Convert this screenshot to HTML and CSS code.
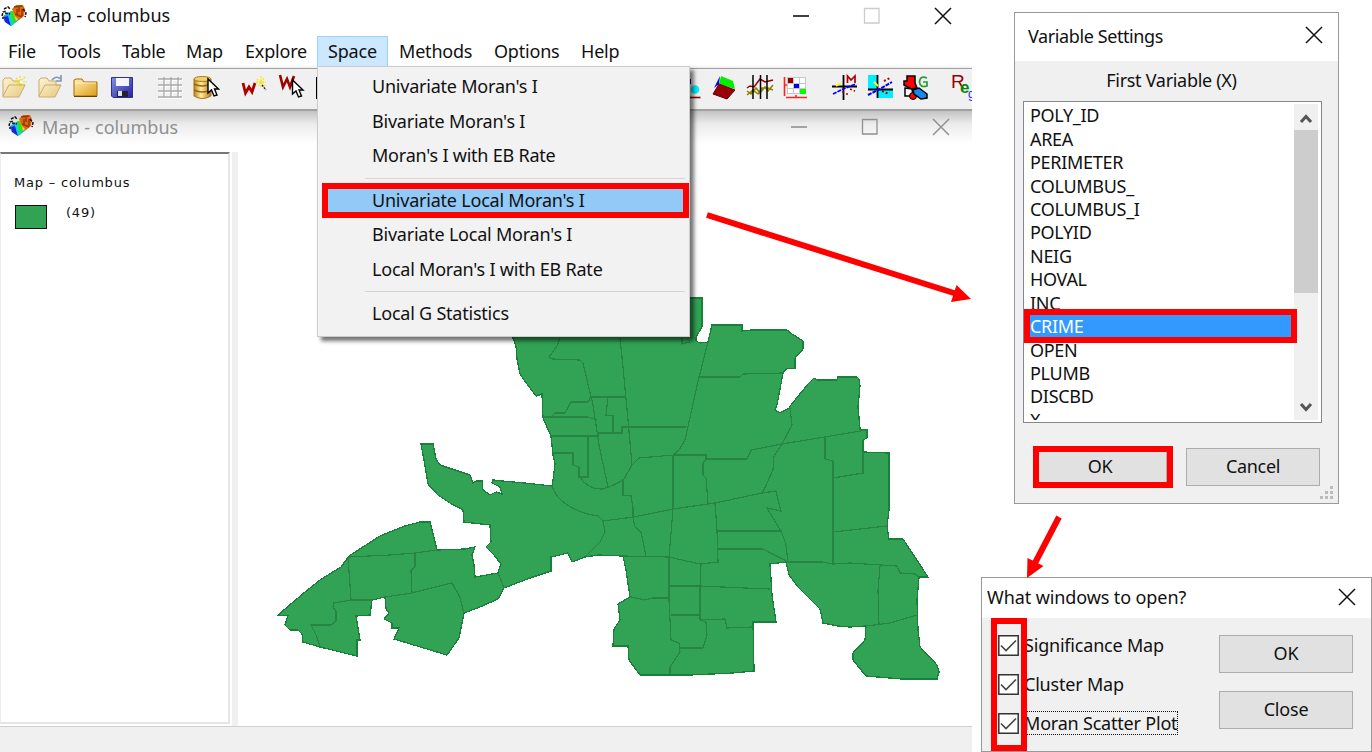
FILE: index.html
```html
<!DOCTYPE html>
<html lang="en">
<head>
<meta charset="utf-8">
<title>Map - columbus</title>
<link rel="stylesheet" href="styles.css">
</head>
<body>
<svg class="defs" width="0" height="0">
  <symbol id="logo" viewBox="0 0 26 24">
    <path d="M2 12L8 8L14 7L18 16L10 22L3 17Z" fill="#18a8e8"/>
    <path d="M3 13L7 12L10 22L4 18Z" fill="#2020e0"/>
    <path d="M7 11L11 10L13 20L10 22Z" fill="#10d8c0"/>
    <path d="M9 7L14 7L16 16L12 19Z" fill="#30e020"/>
    <path d="M12 7L16 10L18 14L15 17Z" fill="#e8e000"/>
    <path d="M11 5L15 1L22 1L24 5L23 12L18 16L14 12Z" fill="#e06810"/>
    <path d="M13 3L21 2M16 5V11M21 5V12M14 10L21 13M18 3V8" fill="none" stroke="#98380a" stroke-width="1.5"/>
    <path d="M1 12L2 8L5 7M3 5L7 3L9 5M4 9L9 10M1 14H3M22 5L25 9L24 13" fill="none" stroke="#111" stroke-width="1.5" stroke-dasharray="3 1"/>
  </symbol>
  <symbol id="cross" viewBox="0 0 18 18"><path d="M1 1L17 17M17 1L1 17" fill="none" stroke="currentColor" stroke-width="1.5"/></symbol>
  <symbol id="max" viewBox="0 0 18 18"><path d="M1.5 1.5H16V16H1.5Z" fill="none" stroke="currentColor" stroke-width="1.3"/></symbol>
  <symbol id="min" viewBox="0 0 18 18"><path d="M1 9H17" stroke="currentColor" stroke-width="1.6"/></symbol>
  <symbol id="check" viewBox="0 0 21 21"><path d="M.8 .8H20.2V20.2H.8Z" fill="#fff" stroke="#333" stroke-width="1.5"/><path d="M3 10.5L8 15.5L18 5.5" fill="none" stroke="#444" stroke-width="1.6"/></symbol>
</svg>

<section class="app">
  <header class="titlebar">
    <svg class="logo"><use href="#logo"/></svg>
    <span class="title">Map - columbus</span>
    <span class="controls"><svg><use href="#min"/></svg><svg class="faded"><use href="#max"/></svg><svg><use href="#cross"/></svg></span>
  </header>
  <nav class="menubar">
    <span>File</span><span>Tools</span><span>Table</span><span>Map</span><span>Explore</span><span class="open">Space</span><span>Methods</span><span>Options</span><span>Help</span>
  </nav>
  <div class="toolbar">
    <svg width="330" height="40" viewBox="0 69 330 40">
      <defs>
        <linearGradient id="gold" x2="1" y2="1"><stop stop-color="#ffedb0"/><stop offset="1" stop-color="#df9d18"/></linearGradient>
        <linearGradient id="pale" x2="1" y2="1"><stop stop-color="#fff4cf"/><stop offset="1" stop-color="#e6c984"/></linearGradient>
        <linearGradient id="can"><stop stop-color="#b98315"/><stop offset=".4" stop-color="#ffeca8"/><stop offset="1" stop-color="#b87a0c"/></linearGradient>
        <linearGradient id="disk" x2="1" y2="1"><stop stop-color="#8490ea"/><stop offset="1" stop-color="#2424a0"/></linearGradient>
        <path id="folder" d="M3 97V80L5 78H11L13 81H20V85H25L19 97Z M3 96L9 85H25"/>
        <path id="cursor" d="M0 0V14L3.500 11L6 17L9 16L6.500 10H10.500Z" fill="#fff" stroke="#000" stroke-width="1.4"/>
      </defs>
      <use href="#folder" fill="url(#pale)" stroke="#c9ac70"/>
      <path d="M20 76V88M14 82H27M16 78L25 87M25 77L15 86" stroke="#e8e020" stroke-width="1.2" stroke-dasharray="2 1"/><circle cx="21" cy="82" r="1.5" fill="#fff"/>
      <use href="#folder" x="36" fill="url(#pale)" stroke="#c9ac70"/>
      <path d="M52 80Q56 75 61 79M61 75V81H56" fill="none" stroke="#7b98b4" stroke-width="1.6"/>
      <path d="M74 96V80L76 79H82L84 82H97V96Z" fill="url(#gold)" stroke="#a46b08"/><path d="M75 83H96" stroke="#fff1bb"/><path d="M74 96.5H97" stroke="#704000"/>
      <path d="M111.500 77.500H132.500V97.500H113L111.500 96Z" fill="url(#disk)" stroke="#30308c"/><path d="M116 78H129V86H116Z" fill="#f4f6ff"/><path d="M117 91H128V97H117Z" fill="#223"/><path d="M118 91H122V96H118Z" fill="#dce4e4"/>
      <g fill="none" stroke="#fff" stroke-width="2"><path d="M159 80H183M159 86H183M159 92H183M159 98H183M165 78V98M172 78V98M179 78V98"/></g>
      <path d="M158 79H182M158 85H182M158 91H182M158 97H182M164 77V97M171 77V97M178 77V97" fill="none" stroke="#a9a9a9" stroke-width="1.3"/>
      <path d="M194 79V96Q202 101 211 96V79Z" fill="url(#can)" stroke="#a77410"/><ellipse cx="202.500" cy="79" rx="8.500" ry="2.500" fill="#f1cf70" stroke="#ad7815"/><path d="M194 84Q202 88 211 84M194 90Q202 94 211 90" fill="none" stroke="#9a6508" stroke-width="1.5"/>
      <use href="#cursor" x="208" y="79"/>
      <path d="M243 83L245.500 93L249 87L252 92L255 83" fill="none" stroke="#b00000" stroke-width="2.8"/>
      <path d="M261 76V87M256 82H266M257 79L265 86M264 78L258 86" stroke="#f2ec25" stroke-width="1.3" stroke-dasharray="2 1"/><path d="M262 85L266 90" stroke="#222" stroke-width="1.4" stroke-dasharray="2 1"/>
      <path d="M280 75L283 87L287 79L290 87L294 76" fill="none" stroke="#a00000" stroke-width="2.6"/>
      <use href="#cursor" x="292.500" y="80"/>
      <path d="M317 77V99" stroke="#000" stroke-width="2"/>
    </svg>
    <svg width="284" height="40" viewBox="688 69 284 40">
      <path d="M688 79H691V84H688Z" fill="#00b"/><circle cx="695" cy="89.500" r="4.300" fill="#00efff"/><path d="M688 97.500H700.500" stroke="#900" stroke-width="1.6"/>
      <path d="M720 76L714 88L719 84Z" fill="#00f"/><path d="M721 76L733 81L735 89L719 84Z" fill="#00f000"/><path d="M719 84L735 90L727 99L713 94Z" fill="#980008" stroke="#600"/>
      <g fill="none" stroke-width="1.5"><path d="M747 88L750 86L754 87L760 79L765 82L773 80" stroke="#900"/><path d="M747 91L751 94L756 88L760 93L765 87L768 91L773 85M747 95L753 90L758 94L762 88L768 88L773 90" stroke="#8b8500" stroke-width="1.5"/><path d="M753 75V99M760.500 75V99M767 75V99" stroke="#000"/></g>
      <path d="M787 77H806V94H787Z" fill="#c7c7c7"/><g fill="#fff"><path d="M788 84H793V88H788ZM794 78H799V83H794ZM800 78H805V83H800ZM800 84H805V88H800ZM788 89H793V93H788ZM794 89H799V93H794Z"/></g><path d="M788 78H793V83H788Z" fill="#900"/><path d="M794 84H799V88H794Z" fill="#00f"/><path d="M800 89H806V94H800Z" fill="#0f0"/><path d="M784.500 77V96M784 85H787M786 97.500H807M796 95V98" stroke="#f22" stroke-width="1.6"/>
      <path d="M843.500 75V100M832 86.500H857" stroke="#000" stroke-width="1.8"/><path d="M833 94L843 89L856 84" fill="none" stroke="#00f" stroke-width="1.8" stroke-dasharray="4 1"/><path d="M846 94H850M850 89L855 91M842 92H845" stroke="#a00" stroke-width="1.6" stroke-dasharray="2 2"/><path d="M836 86L841 83" stroke="#ff0" stroke-width="2"/><path d="M847.500 83V76L851 80L855 76V83" fill="none" stroke="#a00" stroke-width="1.7"/>
      <path d="M868 75H878V89H868ZM878 89H893V98H878Z" fill="#00efff"/><path d="M877.500 75V98M868 89.500H893" stroke="#000" stroke-width="1.8"/><path d="M868 95L878 90L892 82" fill="none" stroke="#00f" stroke-width="2" stroke-dasharray="4 1"/><path d="M884 81L890 78M882 91L889 94" stroke="#a00" stroke-width="2" stroke-dasharray="2 2"/><path d="M874 82L878 86" stroke="#ff0" stroke-width="2"/>
      <path d="M907 76H915V83L917 88L911 89L904 85V81H907Z" fill="#f00" stroke="#000" stroke-width="1.5"/><path d="M905 88L912 89L913 96H905Z" fill="#fff" stroke="#000" stroke-width="1.5"/><circle cx="913" cy="96" r="3.500" fill="#f00" stroke="#000"/><path d="M913 90L919 88L927 94V98L921 99L914 94Z" fill="#158bef" stroke="#000" stroke-width="1.5"/><path d="M927 78Q920 75 919.500 82Q920 88 927 86V82H923" fill="none" stroke="#259b35" stroke-width="1.7"/>
      <text class="reg"><tspan x="951" y="88" fill="#900">R</tspan><tspan class="small" x="960" y="93" fill="#080">e</tspan><tspan class="tiny" x="968" y="98" fill="#22f">g</tspan></text>
    </svg>
  </div>
  <div class="child">
    <header class="titlebar inner">
      <svg class="logo"><use href="#logo"/></svg>
      <span class="title">Map - columbus</span>
      <span class="controls"><svg><use href="#min"/></svg><svg class="strong"><use href="#max"/></svg><svg><use href="#cross"/></svg></span>
    </header>
    <div class="split">
      <aside class="legend"><p>Map – columbus</p><div class="entry"><i></i><span>(49)</span></div></aside>
      <div class="sash"></div>
      <svg class="map" width="700" height="450" viewBox="272 240 700 450" shape-rendering="crispEdges">
        <path class="area" d="M512 330L513 338L516 346L517 359L520 374L524 380L530 388L536 396L542 394L543 418L551 436L553 455L555 464L553 480L552 486L525 483L502 481L493 480L492 483L500 487L502 494L496 492L490 495L483 490L482 481L476 481L473 483L470 475L455 470L440 465L436 459L433 444H421L424 460L428 484L438 495L450 503L463 510L464 522L490 525L491 542L486 547L494 555L501 564L498 573L475 577L474 565L472 555L475 547L465 549L437 550L430 522H420L405 526L380 536L349 556L341 567L320 580L305 592L278 615L288 616L285 625L290 630H298L302 634L303 642L320 647L357 656V640H360L358 628L356 616L370 615L372 600L385 597L386 609L389 613L384 619L392 623V628H399L394 639L447 655L459 638L464 613L480 607L498 599L504 588L530 578L551 571V557L568 553L572 562L585 557L598 555L623 556L626 570L630 597L618 604L620 620L614 629L613 646H628L629 660L640 675H690L733 673L754 671L753 622H776L772 595L770 564L786 562L789 575L798 587L820 609L823 623L838 626L850 627L866 626L865 640L853 653V660L866 676L902 679H937L939 672L937 665L920 647L918 630L917 600L919 577H928L903 539H889L887 526L889 510V453L863 452V440L867 438V430L860 429L858 407L860 386L859 379L857 377H838L837 380H817L814 378L808 384L791 405L789 408L780 413L775 410L777 405L783 373L786 369L795 368V358L803 349V341L792 334L787 330H752L742 331V325H712L708 342L700 343L696 341V337L702 327V298H650V330Z"/>
        <g class="borders">
          <path d="M349 557L390 555L415 553L437 550M348 558L351 599M415 553V567L411 570L412 593L452 583L460 597L464 613M372 600H351L334 603L333 607L336 611V621L331 625H311L316 635L320 646M385 597L412 593M498 573L504 588"/>
          <path d="M560 338L557 346L549 357L552 359L580 360L583 363L593 405L599 445L608 487M620 338L623 367L628 420L632 465M682 338V344L690 342M708 342L699 377L685 440L679 450L673 455M591 397H626M591 397L588 402H571L565 413H555L551 417M543 417H588L597 420M551 436H598L598 433H622V427H686M608 397L606 415L613 416V432M553 453H573V465L579 467V477H588V436"/>
          <path d="M580 477Q588 490 603 489Q618 484 624 479L632 465L639 458L674 455H706V459H747L751 450L782 444L867 430M673 455V509M706 459L703 463V475L706 478L708 503M699 377H740L743 374L783 373M790 408L792 425L782 444L774 456L773 470L762 494"/>
          <path d="M552 486Q557 504 587 514L598 516L603 521L634 517L673 509L715 503L762 493L776 491L781 511L767 508L782 533L786 545L788 562M623 479V495L631 496L633 508V517L635 527L641 532L646 556M603 521L605 532L600 542L585 557M673 509L669 557L669 600L671 640L679 643L680 652L670 667V674M715 503L717 530L718 562L700 564L669 557L623 556M701 564L700 588V620L706 622L707 635L703 648H680M717 531H782M718 549H763L788 562M670 586H700L745 588L770 589M671 615H700M700 620L725 619L727 628L753 627M631 597L645 600L652 598H668"/>
          <path d="M825 436V459L833 461V563M833 478L863 473V452M833 532L887 526M788 562H822L833 564L850 563L897 566L900 573L915 574L919 577M880 566L878 590L879 625M866 626L890 623L917 615"/>
        </g>
      </svg>
    </div>
  </div>
  <footer class="status"></footer>
</section>

<ul class="dropdown">
  <li>Univariate Moran's I</li><li>Bivariate Moran's I</li><li>Moran's I with EB Rate</li>
  <li class="rule"></li>
  <li class="hot">Univariate Local Moran's I</li><li>Bivariate Local Moran's I</li><li>Local Moran's I with EB Rate</li>
  <li class="rule"></li>
  <li>Local G Statistics</li>
</ul>

<section class="dialog variables">
  <header><span>Variable Settings</span><svg><use href="#cross"/></svg></header>
  <div class="label">First Variable (X)</div>
  <div class="listbox">
    <ul><li>POLY_ID</li><li>AREA</li><li>PERIMETER</li><li>COLUMBUS_</li><li>COLUMBUS_I</li><li>POLYID</li><li>NEIG</li><li>HOVAL</li><li>INC</li><li class="chosen">CRIME</li><li>OPEN</li><li>PLUMB</li><li>DISCBD</li><li>X</li></ul>
    <div class="scroll">
      <svg width="23" height="26"><path d="M7 18L12 12.500L17 18" fill="none" stroke="#555" stroke-width="3"/></svg>
      <i></i>
      <svg class="down" width="23" height="26"><path d="M7 10L12 15.500L17 10" fill="none" stroke="#555" stroke-width="3"/></svg>
    </div>
  </div>
  <div class="buttons"><button>OK</button><button>Cancel</button></div>
  <svg class="grip" width="14" height="14" fill="#bbb"><path d="M10 0H13V3H10ZM5 5H8V8H5ZM10 5H13V8H10ZM0 10H3V13H0ZM5 10H8V13H5ZM10 10H13V13H10Z"/></svg>
</section>

<section class="dialog windows">
  <header><span>What windows to open?</span><svg><use href="#cross"/></svg></header>
  <div class="body">
    <div class="checks">
      <label><svg><use href="#check"/></svg><span>Significance Map</span></label>
      <label><svg><use href="#check"/></svg><span>Cluster Map</span></label>
      <label><svg><use href="#check"/></svg><span class="focus">Moran Scatter Plot</span></label>
    </div>
    <div class="stack"><button>OK</button><button>Close</button></div>
  </div>
</section>

<div class="mark mark-menu"></div>
<div class="mark mark-crime"></div>
<div class="mark mark-ok"></div>
<div class="mark mark-checks"></div>
<svg class="arrows" width="1372" height="752">
  <path d="M707 215L957 294" stroke="#f00" stroke-width="6"/><path d="M971 299L951 302L956.500 285Z" fill="#f00"/>
  <path d="M1059 517L1035 563" stroke="#f00" stroke-width="6"/><path d="M1027 578L1027.500 558L1043.500 566Z" fill="#f00"/>
</svg>
</body>
</html>
```
FILE: styles.css
```css
* { box-sizing: border-box; }
body { margin: 0; width: 1372px; height: 752px; position: relative; overflow: hidden; background: #fff; color: #111; font: 18px/24px "Noto Sans", "Open Sans", sans-serif; letter-spacing: -0.3px; }
ul { list-style: none; margin: 0; padding: 0; }
.defs { position: absolute; }
.app { width: 972px; height: 752px; display: flex; flex-direction: column; }
.titlebar { height: 36px; display: flex; padding: 4px 20px 0 1px; flex: none; }
.logo { width: 26px; height: 24px; flex: none; }
.titlebar .title { margin-left: 7px; line-height: 23px; letter-spacing: 0.05px; }
.controls { margin-left: auto; display: flex; gap: 53px; padding-top: 3px; }
.controls svg { width: 18px; height: 18px; }
.controls .faded { color: #ccc; }
.menubar { height: 32px; flex: none; display: grid; grid-template-columns: 50px 64px 65px 59px 71px 82px 95px 87px 60px; padding-left: 8px; line-height: 30px; background: linear-gradient(#fff 90%, #eee); letter-spacing: -0.2px; }
.menubar span:nth-child(4) { margin-left: -1px; }
.menubar span:nth-child(5) { margin-left: -1px; }
.menubar .open { height: 31px; width: 71px; padding-left: 10px; line-height: 28px; border: 1px solid #99d1ff; background: #cce8ff; }
.toolbar { height: 43px; flex: none; display: flex; justify-content: space-between; background: #f0f0f0; border-top: 1px solid #a0a0a0; border-bottom: 2px solid #a0a0a0; }
.toolbar svg { display: block; }
.reg { font: 19px "Liberation Sans", sans-serif; letter-spacing: 0; }
.small { font-size: 17px; font-weight: bold; }
.tiny { font-size: 12px; }
.child { flex: 1; display: flex; flex-direction: column; background: linear-gradient(#c3c3c3, #ececec 13px, #fff 33px); }
.inner { height: 41px; padding: 4px 22px 0 8px; color: #909090; }
.inner .title { margin-left: 8px; line-height: 24px; }
.inner .logo { margin-top: -1px; }
.split { flex: 1; display: flex; }
.legend { width: 230px; height: 572px; border-top: 2px solid #777; border-right: 2px solid #e5e5e5; border-bottom: 2px solid #e5e5e5; border-left: 1px solid #eee; background: #fff; padding: 18px 0 0 13px; color: #111; font: 13px/22px "DejaVu Sans", sans-serif; letter-spacing: .8px; }
.legend p { margin: 0; }
.entry { display: flex; gap: 19px; margin-top: 10px; padding-left: 1px; }
.entry i { width: 32px; height: 24px; margin-top: 1px; background: #32a354; border: 1.500px solid #111; }
.entry span { line-height: 18px; }
.sash { width: 6px; margin-left: 2px; height: 574px; background: #f0f0f0; }
.map { display: block; margin: 88px 0 0 34px; }
.area { fill: #32a354; stroke: #19803b; stroke-width: 1.3; }
.borders { fill: none; stroke: #278443; stroke-width: 1.2; }
.status { height: 26px; flex: none; background: #f0f0f0; border-top: 1px solid #d0d0d0; }
.dropdown { position: absolute; left: 317px; top: 66px; width: 373px; height: 271px; padding: 3px 4px; background: #f2f2f2; border: 1px solid #ccc; box-shadow: 4px 4px 4px rgba(0,0,0,.55); letter-spacing: -0.22px; }
.dropdown li { height: 34.500px; line-height: 33px; padding-left: 50px; }
.dropdown .rule { height: 10px; margin-left: 43px; padding: 0; border-top: 1px solid #d5d5d5; transform: translateY(4px); }
.dropdown .hot { background: #91c9f7; }
.dialog { position: absolute; background: #f0f0f0; border: 1px solid #999; }
.dialog header { background: #fff; display: flex; justify-content: space-between; }
.dialog header svg { width: 18px; height: 18px; }
.variables { left: 1014px; top: 12px; width: 325px; height: 492px; }
.variables header { height: 48px; padding: 11px 15px 0 13px; letter-spacing: -0.4px; }
.variables header svg { margin-top: 2px; }
.label { height: 40px; text-align: center; line-height: 38px; padding-right: 10px; }
.listbox { margin-left: 8px; width: 299px; height: 322px; border: 2px solid #828790; border-width: 1.500px; background: #fff; display: flex; padding: 2px 3px 2px 1px; }
.listbox ul { width: 270px; overflow: hidden; line-height: 23.450px; letter-spacing: -0.3px; padding-top: .2px; }
.listbox li { height: 23.450px; padding-left: 5px; }
.listbox .chosen { background: #3399ff; color: #fff; }
.scroll { width: 24px; background: #f0f0f0; display: flex; flex-direction: column; }
.scroll i { height: 163px; background: #cdcdcd; }
.scroll .down { margin-top: auto; }
button { display: block; width: 134px; height: 38px; padding: 0 0 2px 0; border: 1.500px solid #adadad; border-radius: 0; background: #e1e1e1; color: #111; font: inherit; letter-spacing: inherit; }
.buttons { display: flex; gap: 19px; padding: 25px 0 0 18px; }
.grip { position: absolute; right: 4px; bottom: 3px; }
.windows { left: 981px; top: 577px; width: 391px; height: 175px; letter-spacing: -0.2px; }
.windows header { height: 40px; padding: 7px 15px 0 5px; letter-spacing: -0.1px; }
.windows header svg { margin-top: 3px; }
.body { display: flex; justify-content: space-between; padding: 17px 18px 0 16px; }
.checks { display: flex; flex-direction: column; gap: 15px; margin-top: -2px; }
.checks label { display: flex; height: 24px; align-items: center; }
.checks svg { width: 21px; height: 21px; }
.checks span { margin-left: 5px; line-height: 22px; }
.focus { outline: 1px dotted #111; }
.stack { display: flex; flex-direction: column; gap: 18px; }
.mark { position: absolute; border: 6px solid #f00; }
.mark-menu { left: 322px; top: 183px; width: 367px; height: 35px; }
.mark-crime { left: 1024px; top: 309px; width: 273px; height: 34px; }
.mark-ok { left: 1033px; top: 446px; width: 140px; height: 42px; }
.mark-checks { left: 991px; top: 618px; width: 36px; height: 133px; }
.arrows { position: absolute; left: 0; top: 0; pointer-events: none; }
```
